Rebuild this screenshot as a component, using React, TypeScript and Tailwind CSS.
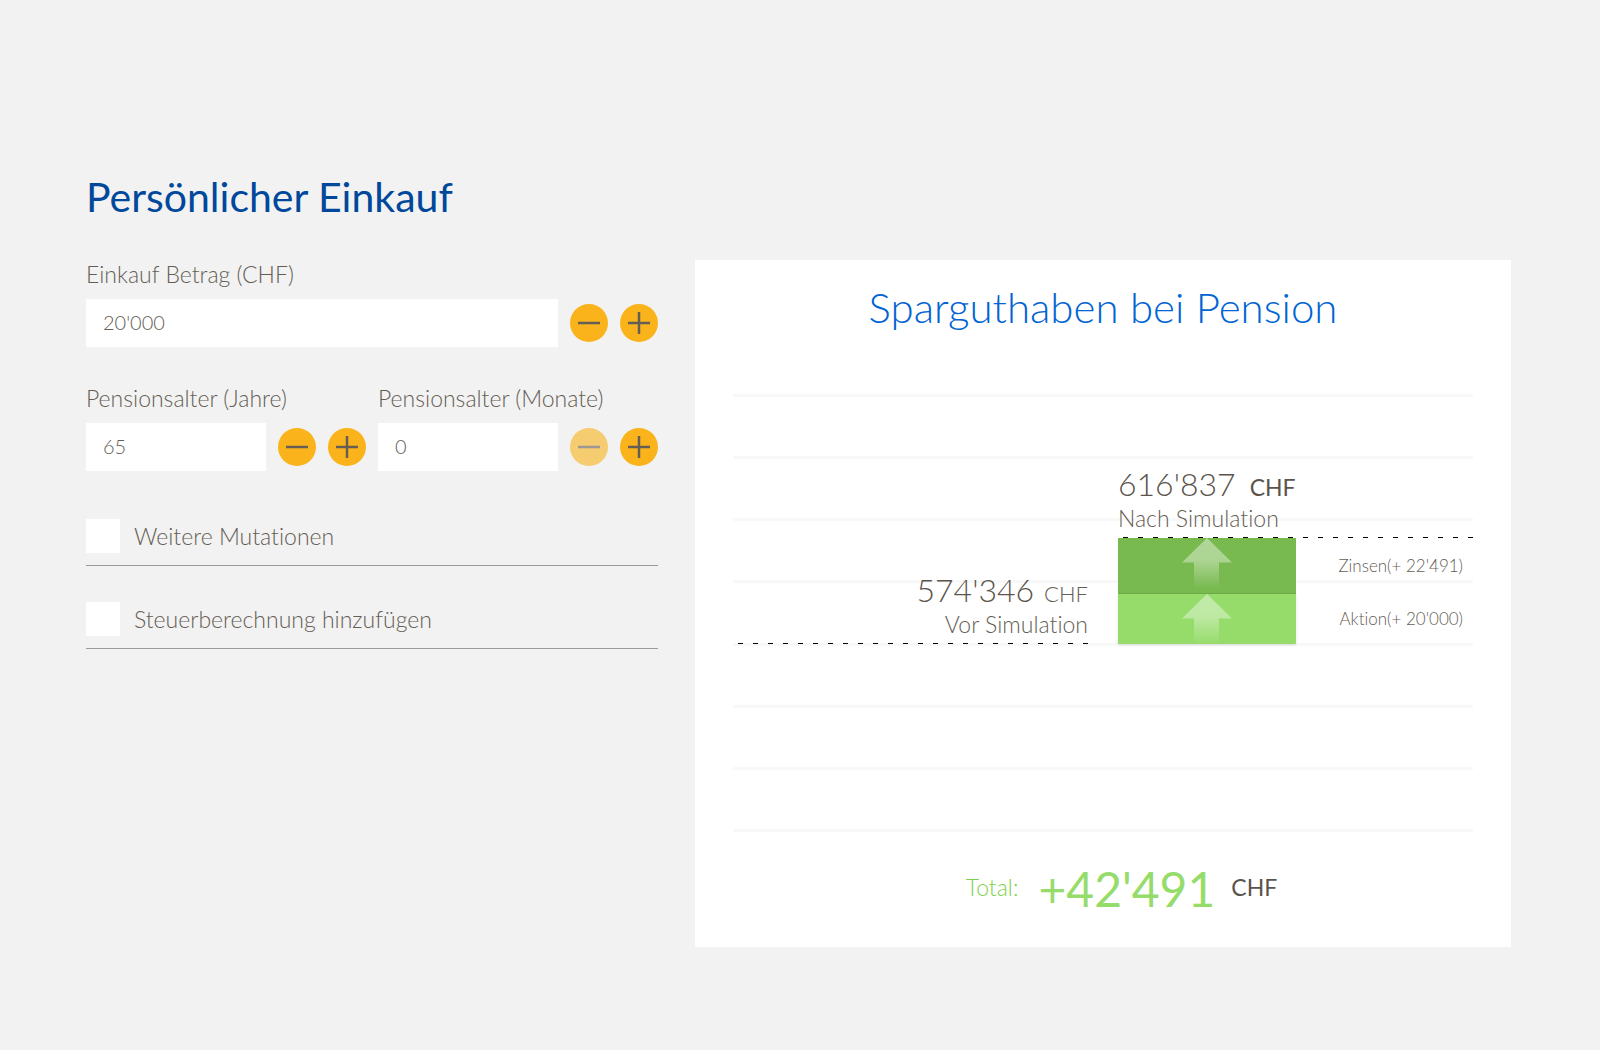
import React, { useId, useState } from "react";

type StepButtonProps = {
  kind: "minus" | "plus";
  label: string;
  disabled?: boolean;
  onClick: () => void;
};

function StepButton({ kind, label, disabled, onClick }: StepButtonProps) {
  return (
    <button
      type="button"
      aria-label={label}
      disabled={disabled}
      onClick={onClick}
      className="flex size-[38px] shrink-0 items-center justify-center rounded-full bg-[#fab31b] disabled:opacity-60"
    >
      <svg width="22" height="22" viewBox="0 0 22 22" fill="none" stroke="#655e55" strokeWidth="2.5">
        <path d="M0 11H22" />
        {kind === "plus" && <path d="M11 0V22" />}
      </svg>
    </button>
  );
}

type NumberFieldProps = {
  label: string;
  value: number;
  step: number;
  onChange: (value: number) => void;
};

function formatAmount(value: number) {
  return String(value).replace(/\B(?=(\d{3})+$)/g, "'");
}

function NumberField({ label, value, step, onChange }: NumberFieldProps) {
  const id = useId();
  return (
    <div className="flex min-w-0 flex-1 flex-col gap-3">
      <label htmlFor={id} className="whitespace-nowrap text-[23px] leading-[26px]">
        {label}
      </label>
      <div className="flex items-center gap-3">
        <input
          id={id}
          type="text"
          inputMode="numeric"
          value={formatAmount(value)}
          onChange={(e) => onChange(Number(e.target.value.replace(/\D/g, "")))}
          className="h-12 w-0 min-w-0 flex-1 bg-white px-[17px] pb-0.5 text-[20px] outline-none"
        />
        <StepButton
          kind="minus"
          label={`${label} verringern`}
          disabled={value === 0}
          onClick={() => onChange(Math.max(0, value - step))}
        />
        <StepButton kind="plus" label={`${label} erhöhen`} onClick={() => onChange(value + step)} />
      </div>
    </div>
  );
}

function CheckRow({ label }: { label: string }) {
  return (
    <label className="flex items-center gap-3.5 border-b border-[#9b9b9b] pb-3 text-[23px] leading-7">
      <input
        type="checkbox"
        className="size-[34px] shrink-0 appearance-none bg-white checked:bg-[#fab31b]"
      />
      {label}
    </label>
  );
}

function DashedLine() {
  return (
    <div className="ml-[5px] h-px bg-[repeating-linear-gradient(to_left,#000_0px,#000_5px,transparent_5px,transparent_15px)]" />
  );
}

function UpArrow() {
  const id = useId();
  return (
    <svg width="50" height="52" viewBox="0 0 50 52" className="mx-auto">
      <defs>
        <linearGradient id={id} x1="0" y1="0" x2="0" y2="1">
          <stop offset="0" stopColor="#fff" stopOpacity="0.42" />
          <stop offset="0.45" stopColor="#fff" stopOpacity="0.38" />
          <stop offset="1" stopColor="#fff" stopOpacity="0" />
        </linearGradient>
      </defs>
      <path d="M25 0L50 24.500H37V50H12V24.500H0Z" fill={`url(#${id})`} />
    </svg>
  );
}

function SavingsChart() {
  return (
    <div className="grid">
      <div className="col-start-1 row-start-1 flex h-[438px] flex-col justify-between">
        {Array.from({ length: 8 }, (_, i) => (
          <div key={i} className="h-[3px] bg-[#f8f8f9]" />
        ))}
      </div>
      <div className="z-10 col-start-1 row-start-1 grid h-[250px] grid-cols-[385fr_355fr] items-end self-start">
        <div className="mr-[30px]">
          <div className="flex items-baseline justify-end gap-2.5">
            <span className="text-[32px] leading-9 text-[#5b544c]">574'346</span>
            <span className="text-[22px]">CHF</span>
          </div>
          <div className="pb-[5px] text-right text-[23px] leading-7">Vor Simulation</div>
          <DashedLine />
        </div>
        <div>
          <div className="flex items-baseline gap-3.5">
            <span className="text-[32px] leading-9 text-[#5b544c]">616'837</span>
            <span className="text-[23px] font-normal text-[#5b544c]">CHF</span>
          </div>
          <div className="pb-[5px] text-[23px] leading-7">Nach Simulation</div>
          <DashedLine />
          <div className="grid grid-cols-[178fr_177fr] grid-rows-[56px_50px] items-center text-[17px]">
            <div className="h-full border-b border-[#6fae4a] bg-[#79ba50]">
              <UpArrow />
            </div>
            <div className="pr-2.5 text-right">Zinsen(+ 22'491)</div>
            <div className="h-full bg-[#96dc6b] shadow-sm">
              <UpArrow />
            </div>
            <div className="pr-2.5 text-right">Aktion(+ 20'000)</div>
          </div>
        </div>
      </div>
    </div>
  );
}

export default function App() {
  const [amount, setAmount] = useState(20000);
  const [years, setYears] = useState(65);
  const [months, setMonths] = useState(0);

  return (
    <main className="min-h-screen bg-[#f2f2f2] pt-[174px] pr-[89px] pb-[103px] pl-[86px] font-['Lato',sans-serif] font-light text-[#655e55] [font-variant-ligatures:none]">
      <h1 className="text-[41px] leading-[46px] font-normal text-[#00489b]">Persönlicher Einkauf</h1>
      <div className="mt-10 grid grid-cols-[572fr_816fr] items-start gap-[37px]">
        <form className="flex flex-col gap-[38px] pt-px">
          <NumberField label="Einkauf Betrag (CHF)" value={amount} step={1000} onChange={setAmount} />
          <div className="flex gap-3">
            <NumberField label="Pensionsalter (Jahre)" value={years} step={1} onChange={setYears} />
            <NumberField label="Pensionsalter (Monate)" value={months} step={1} onChange={setMonths} />
          </div>
          <div className="mt-2.5 flex flex-col gap-9">
            <CheckRow label="Weitere Mutationen" />
            <CheckRow label="Steuerberechnung hinzufügen" />
          </div>
        </form>
        <section className="bg-white px-[38px] pt-6 pb-7">
          <h2 className="mb-16 text-center text-[42px] leading-[46px] text-[#0064d2]">
            Sparguthaben bei Pension
          </h2>
          <SavingsChart />
          <div className="mt-[27px] flex items-center justify-center pl-[37px] font-normal">
            <span className="pb-1 text-[23px] font-light text-[#7ed14c]">Total:</span>
            <span className="ml-5 text-[48px] leading-[60px] text-[#96dc6b]">+42'491</span>
            <span className="ml-4 pb-1 text-[23px] text-[#5b544c]">CHF</span>
          </div>
        </section>
      </div>
    </main>
  );
}
